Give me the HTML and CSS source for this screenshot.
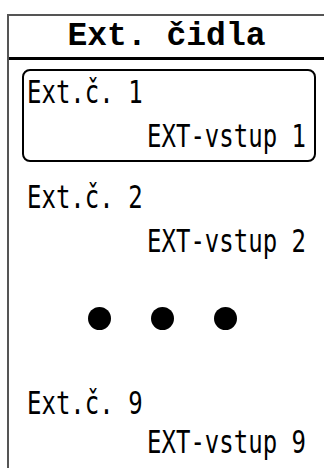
FILE: index.html
```html
<!DOCTYPE html>
<html>
  <head>
    <title>Ext. čidla</title>
    <meta charset="utf-8" />
    <link rel="stylesheet" href="styles.css">
  </head>
  <body>
    <div class="screen">
      <h1 class="title">Ext. čidla</h1>

      <div class="list">
        <div class="item selected">
          <div class="line">Ext.č. 1</div>
          <div class="line right">EXT-vstup 1</div>
        </div>
        <div class="item">
          <div class="line">Ext.č. 2</div>
          <div class="line right">EXT-vstup 2</div>
        </div>
        <div class="dots">
          <span class="dot"></span>
          <span class="dot"></span>
          <span class="dot"></span>
        </div>
        <div class="item compact">
          <div class="line">Ext.č. 9</div>
          <div class="line right">EXT-vstup 9</div>
        </div>
      </div>
    </div>
  </body>
</html>
```

FILE: styles.css
```css
body {
  margin: 0;
  background-color: #fff;
  color: #000;
  overflow: hidden;
}

.screen {
  margin: 14px 0 0 7px;
  height: 454px;
  border-top: 2px solid #555;
  border-left: 2px solid #555;
}

.title {
  margin: 0;
  height: 41px;
  line-height: 41px;
  border-bottom: 3px solid #000;
  text-align: center;
  font-family: "Liberation Mono", monospace;
  font-weight: bold;
  font-size: 33px;
}

.list {
  display: flex;
  flex-direction: column;
  gap: 12px;
  padding: 9px 8px 0 13px;
}

.item {
  border: 2px solid transparent;
  border-radius: 8px;
  padding: 0 8px 1px 3px;
}

.item.selected {
  border-color: #000;
}

.line {
  height: 44px;
  line-height: 44px;
  font-family: "DejaVu Sans Mono", monospace;
  font-size: 24px;
  transform: scaleY(1.3);
  white-space: pre;
}

.compact .line {
  height: 39px;
  line-height: 39px;
}

.right {
  text-align: right;
}

.dots {
  display: flex;
  justify-content: center;
  align-items: center;
  gap: 40px;
  height: 78px;
  padding-bottom: 14px;
  margin-left: -13px;
}

.dot {
  width: 23px;
  height: 23px;
  border-radius: 50%;
  background-color: #000;
}
```
